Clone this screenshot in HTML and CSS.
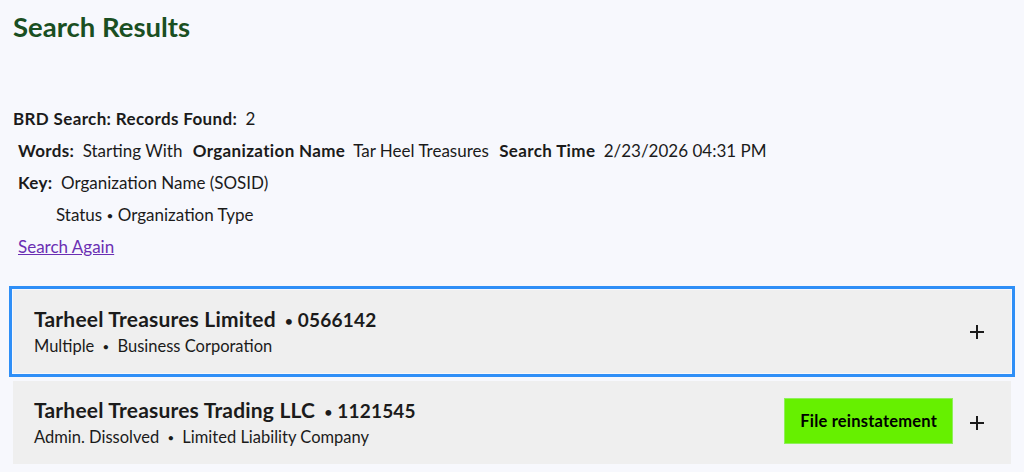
FILE: index.html
```html
<!DOCTYPE html>
<html lang="en">
<head>
  <meta charset="UTF-8">
  <meta name="viewport" content="width=device-width, initial-scale=1.0">
  <title>Search Results</title>
  <link rel="stylesheet" href="styles.css">
</head>
<body>
  <h1>Search Results</h1>

  <div class="summary">
    <div class="line"><b>BRD Search: Records Found:</b> 2</div>
    <div class="line indent">
      <b>Words:</b> Starting With
      <b class="sep">Organization Name</b> Tar Heel Treasures
      <b class="sep">Search Time</b> 2/23/2026 04:31 PM
    </div>
    <div class="line indent"><b>Key:</b> Organization Name (SOSID)</div>
    <div class="line key-sub">Status <span class="dot">&bull;</span> Organization Type</div>
    <div class="line indent"><a href="#" class="again">Search Again</a></div>
  </div>

  <div class="results">
    <div class="card focused">
      <div class="info">
        <div class="name">Tarheel Treasures Limited <span class="id"><span class="dot">&bull;</span> 0566142</span></div>
        <div class="meta">Multiple <span class="dot">&bull;</span> Business Corporation</div>
      </div>
      <svg class="plus" viewBox="0 0 14 14" width="14" height="14"><path d="M7 0v14M0 7h14" stroke="#1b1b1b" stroke-width="2"/></svg>
    </div>

    <div class="card">
      <div class="info">
        <div class="name">Tarheel Treasures Trading LLC <span class="id"><span class="dot">&bull;</span> 1121545</span></div>
        <div class="meta">Admin. Dissolved <span class="dot">&bull;</span> Limited Liability Company</div>
      </div>
      <button class="reinstate">File reinstatement</button>
      <svg class="plus" viewBox="0 0 14 14" width="14" height="14"><path d="M7 0v14M0 7h14" stroke="#1b1b1b" stroke-width="2"/></svg>
    </div>
  </div>
</body>
</html>
```

FILE: styles.css
```css
body {
  font-family: Lato, 'Noto Sans', sans-serif;
  background: #f7f8fd;
  color: #1b1b1b;
  margin: 0;
  padding: 0 13px;
}
h1 {
  font-size: 27.5px;
  line-height: 34px;
  color: #1a4f22;
  margin: 10px 0 59px;
}
.line {
  font-size: 17px;
  line-height: 32px;
}
.line b {
  margin-right: 4px;
  letter-spacing: 0.35px;
}
.line .sep {
  margin-left: 6px;
}
.indent {
  padding-left: 5px;
}
.key-sub {
  padding-left: 43px;
}
.dot {
  font-size: 0.7em;
  line-height: 1;
  vertical-align: 0.1em;
}
.again {
  color: #6b2fb3;
}
.results {
  margin-top: 27px;
  display: flex;
  flex-direction: column;
  gap: 8px;
}
.card {
  background: #efefef;
  display: flex;
  align-items: center;
  height: 83px;
  box-sizing: border-box;
  padding: 0 27px 0 21px;
}
.card.focused {
  outline: 3px solid #2f8ff7;
  outline-offset: 1px;
}
.info {
  flex: 1;
}
.name {
  font-size: 21px;
  line-height: 26px;
  font-weight: bold;
  letter-spacing: 0.2px;
}
.name .id {
  margin-left: 4px;
  font-size: 19px;
}
.meta {
  font-size: 16.5px;
  line-height: 22px;
  margin-top: 2px;
}
.meta .dot {
  margin: 0 4px;
}
.reinstate {
  background: #66f000;
  border: 1px solid #8ef05a;
  font-family: inherit;
  font-size: 16.5px;
  font-weight: bold;
  letter-spacing: 0.2px;
  color: #000;
  padding: 0 15px;
  height: 46px;
  margin: -4px 17px 0 0;
  cursor: pointer;
}
.plus {
  display: block;
}
```
